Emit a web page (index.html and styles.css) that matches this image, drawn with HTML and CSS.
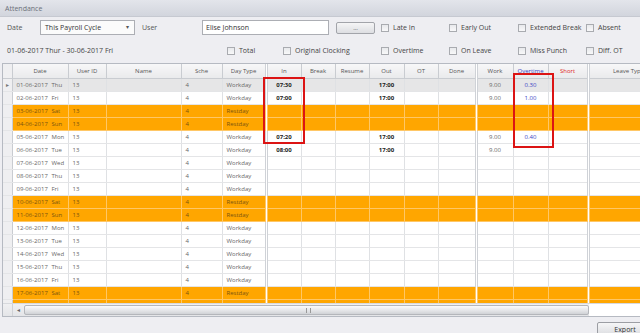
FILE: index.html
```html
<!DOCTYPE html>
<html lang="en">
<head>
    <meta charset="UTF-8">
    <meta name="viewport" content="width=device-width, initial-scale=1.0">
    <title>Attendance</title>
    <link rel="stylesheet" href="styles.css">
</head>
<body>
    <div class="window">
        <div class="titlebar">Attendance</div>

        <div class="filters">
            <div class="filter-row">
                <span class="lbl w-date">Date</span>
                <div class="select">This Payroll Cycle<span class="caret">&#9662;</span></div>
                <span class="lbl w-user">User</span>
                <div class="textbox">Elise Johnson</div>
                <button class="dots-btn">...</button>
                <label class="chk w-a"><i></i>Late In</label>
                <label class="chk w-b"><i></i>Early Out</label>
                <label class="chk w-a"><i></i>Extended Break</label>
                <label class="chk"><i></i>Absent</label>
            </div>
            <div class="filter-row">
                <span class="range">01-06-2017 Thur - 30-06-2017 Fri</span>
                <label class="chk w-total"><i></i>Total</label>
                <label class="chk w-orig"><i></i>Original Clocking</label>
                <label class="chk w-a"><i></i>Overtime</label>
                <label class="chk w-b"><i></i>On Leave</label>
                <label class="chk w-a"><i></i>Miss Punch</label>
                <label class="chk"><i></i>Diff. OT</label>
            </div>
        </div>

        <div class="grid">
            <div class="grid-body">
                <table class="att-table">
                    <colgroup>
                        <col style="width:9px"><col style="width:56px"><col style="width:38px">
                        <col style="width:75px"><col style="width:41px"><col style="width:44px">
                        <col style="width:35px"><col style="width:34px"><col style="width:34px">
                        <col style="width:35px"><col style="width:34px"><col style="width:38px">
                        <col style="width:37px"><col style="width:35px"><col style="width:40px">
                        <col style="width:80px">
                    </colgroup>
                    <thead>
                        <tr>
                            <th class="rowhdr"></th>
                            <th>Date</th>
                            <th>User ID</th>
                            <th>Name</th>
                            <th>Sche</th>
                            <th class="sep">Day Type</th>
                            <th>In</th>
                            <th>Break</th>
                            <th>Resume</th>
                            <th>Out</th>
                            <th>OT</th>
                            <th class="sep">Done</th>
                            <th>Work</th>
                            <th class="sorted">Overtime</th>
                            <th class="sep short">Short</th>
                            <th>Leave Type</th>
                        </tr>
                    </thead>
                    <tbody id="att-rows"></tbody>
                </table>
                <div class="mark mark-in"></div>
                <div class="mark mark-ot"></div>
            </div>
            <div class="hscroll">
                <div class="hs-corner"></div>
                <div class="hs-arrow">&#9666;</div>
                <div class="hs-thumb"><span class="grip"></span></div>
                <div class="hs-rest"></div>
            </div>
        </div>

        <div class="footer">
            <button class="export-btn">Export</button>
        </div>
    </div>

    <script>
        // Attendance records for June 2017
        const days = ['Sun', 'Mon', 'Tue', 'Wed', 'Thu', 'Fri', 'Sat'];
        const clocking = {
            1: { inTime: '07:30', out: '17:00', work: '9.00', ot: '0.30' },
            2: { inTime: '07:00', out: '17:00', work: '9.00', ot: '1.00' },
            5: { inTime: '07:20', out: '17:00', work: '9.00', ot: '0.40' },
            6: { inTime: '08:00', out: '17:00', work: '9.00', ot: '' }
        };

        const tbody = document.getElementById('att-rows');

        function renderRows() {
            for (let d = 1; d <= 18; d++) {
                const date = new Date(2017, 5, d);
                const dayName = days[date.getDay()];
                const rest = dayName === 'Sat' || dayName === 'Sun';
                const c = clocking[d] || { inTime: '', out: '', work: '', ot: '' };
                const dd = String(d).padStart(2, '0');

                const tr = document.createElement('tr');
                tr.className = rest ? 'rest' : (d === 1 ? 'current' : '');

                // last row is only partly visible above the scrollbar
                if (d === 18) {
                    tr.innerHTML = '<td class="rowhdr"></td>' +
                        '<td></td><td></td><td></td><td></td><td class="sep"></td>' +
                        '<td></td><td></td><td></td><td></td><td></td><td class="sep"></td>' +
                        '<td></td><td></td><td class="sep"></td><td></td>';
                    tbody.appendChild(tr);
                    continue;
                }

                tr.innerHTML = `
                    <td class="rowhdr">${d === 1 ? '&#9656;' : ''}</td>
                    <td class="c-date"><span class="dt">${dd}-06-2017</span>${dayName}</td>
                    <td class="c-left">13</td>
                    <td></td>
                    <td class="c-left">4</td>
                    <td class="c-left sep">${rest ? 'Restday' : 'Workday'}</td>
                    <td class="c-time">${c.inTime}</td>
                    <td></td>
                    <td></td>
                    <td class="c-time">${c.out}</td>
                    <td></td>
                    <td class="sep"></td>
                    <td class="c-num">${c.work}</td>
                    <td class="c-ot">${c.ot}</td>
                    <td class="sep"></td>
                    <td></td>
                `;
                tbody.appendChild(tr);
            }
        }

        renderRows();
    </script>
</body>
</html>
```

FILE: styles.css
```css
body {
    margin: 0;
    background-color: #eeeef2;
    font-family: 'Open Sans', 'Noto Sans', sans-serif;
    color: #444;
    overflow: hidden;
}

.window {
    width: 640px;
    height: 333px;
    overflow: hidden;
}

.titlebar {
    height: 17px;
    line-height: 17px;
    padding-left: 5px;
    font-size: 7px;
    color: #6c707a;
    background: linear-gradient(#e3e5eb, #d2d5dd);
    border-bottom: 1px solid #c6c9d1;
    box-sizing: border-box;
}

/* filter area */
.filters {
    padding: 2px 0 0 7px;
}

.filter-row {
    display: flex;
    align-items: center;
    height: 17px;
    font-size: 7px;
}

.filter-row + .filter-row {
    margin-top: 6px;
}

.lbl {
    color: #555;
}

.w-date { width: 33px; }
.w-user { width: 60px; }
.w-a { width: 68px; }
.w-b { width: 69px; }
.w-total { width: 56px; }
.w-orig { width: 98px; }

.range {
    width: 220px;
    color: #444;
}

.select {
    width: 95px;
    height: 15px;
    box-sizing: border-box;
    border: 1px solid #acaeb4;
    background: #fbfbfb;
    padding-left: 4px;
    line-height: 13px;
    display: flex;
    justify-content: space-between;
    color: #333;
    margin-right: 7px;
}

.caret {
    font-size: 6px;
    color: #555;
    padding-right: 5px;
}

.textbox {
    width: 127px;
    height: 15px;
    box-sizing: border-box;
    border: 1px solid #acaeb4;
    background: #fff;
    padding-left: 3px;
    line-height: 13px;
    color: #333;
    margin-right: 7px;
}

.dots-btn {
    width: 39px;
    height: 12px;
    padding: 0;
    border: 1px solid #a2a4aa;
    border-radius: 2px;
    background: linear-gradient(#f5f5f6, #dddee2);
    font-family: inherit;
    font-size: 6px;
    line-height: 6px;
    color: #444;
    margin-right: 6px;
}

.chk {
    display: flex;
    align-items: center;
    gap: 4px;
    color: #444;
    white-space: nowrap;
}

.chk i {
    display: block;
    width: 6px;
    height: 6px;
    border: 1px solid #a9abb0;
    background: linear-gradient(#e8e9ec, #f8f8f9);
}

/* data grid */
.grid {
    margin: 4px 0 0 2px;
    border: 1px solid #b6bac2;
    border-right: none;
    background: #fff;
}

.grid-body {
    position: relative;
    height: 239px;
    overflow: hidden;
}

.att-table {
    table-layout: fixed;
    border-collapse: collapse;
    width: 665px;
    font-size: 6px;
}

.att-table th {
    height: 14px;
    padding: 0;
    font-weight: normal;
    color: #555;
    background: linear-gradient(#f7f7f8, #e9eaec);
    border-right: 1px solid #c9ccd1;
    border-bottom: 1px solid #c9ccd1;
    white-space: nowrap;
    overflow: hidden;
}

.att-table th.sorted {
    color: #3a3fc4;
    text-decoration: underline;
}

.att-table th.short {
    color: #d22;
}

.att-table td {
    height: 12px;
    padding: 0;
    border-right: 1px solid #dfe1e4;
    border-bottom: 1px solid #e4e5e7;
    color: #666;
    white-space: nowrap;
    overflow: hidden;
}

.att-table .sep {
    border-right: 3px double #cfd2d7;
}

.att-table .rowhdr {
    background: #efeff1;
    border-right: 1px solid #c9ccd1;
    color: #777;
    font-size: 6px;
    text-align: center;
}

.att-table tr.current td {
    background: #e6e6e7;
}

.att-table tr.current td.rowhdr {
    background: #efeff1;
}

.att-table tr.rest td {
    background: #ffa600;
    color: #7a5410;
    border-bottom-color: #ffc766;
    border-right-color: #ffc766;
}

.att-table tr.rest td.rowhdr {
    background: #efeff1;
    border-right-color: #c9ccd1;
    border-bottom-color: #e4e5e7;
}

.c-date {
    padding-left: 4px !important;
}

.c-date .dt {
    display: inline-block;
    width: 35px;
}

.c-left {
    padding-left: 4px !important;
}

.c-time {
    text-align: center;
    font-weight: bold;
    color: #222 !important;
}

.c-num {
    text-align: center;
}

.c-ot {
    text-align: center;
    color: #3a3fc4 !important;
}

/* red highlight boxes */
.mark {
    position: absolute;
    border: 2px solid #dc1414;
    box-sizing: border-box;
}

.mark-in {
    left: 260px;
    top: 13px;
    width: 42px;
    height: 67px;
}

.mark-ot {
    left: 510px;
    top: 9px;
    width: 41px;
    height: 75px;
}

/* horizontal scrollbar */
.hscroll {
    display: flex;
    height: 12px;
    background: linear-gradient(#f0f0f2, #e4e5e8);
    border-top: 1px solid #d7d9dd;
}

.hs-corner {
    width: 9px;
    border-right: 1px solid #d0d2d6;
}

.hs-arrow {
    width: 11px;
    font-size: 6px;
    line-height: 12px;
    text-align: center;
    color: #666;
}

.hs-thumb {
    width: 565px;
    margin: 1px 0;
    border: 1px solid #b4b6bb;
    border-radius: 2px;
    background: linear-gradient(#fbfbfc, #e3e4e7 60%, #d0d2d6);
    box-sizing: border-box;
    position: relative;
}

.grip {
    position: absolute;
    left: 281px;
    top: 2px;
    width: 3px;
    height: 5px;
    border-left: 1px solid #999;
    border-right: 1px solid #999;
}

.hs-rest {
    flex: 1;
    background: #fff;
}

.footer {
    display: flex;
    padding: 5px 0 0 597px;
}

.export-btn {
    flex: none;
    width: 56px;
    height: 14px;
    padding: 0;
    border: 1px solid #9c9ea4;
    border-radius: 2px;
    background: linear-gradient(#f6f6f7, #dcdde1);
    font-family: inherit;
    font-size: 7px;
    color: #333;
}
```
